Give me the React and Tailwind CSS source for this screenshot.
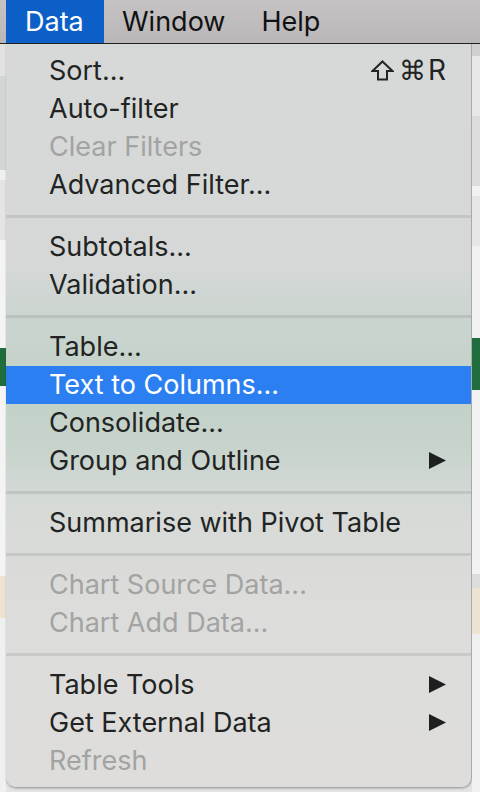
import React from "react";

const font = { fontFamily: "Inter, 'Noto Sans', 'DejaVu Sans', sans-serif" };

function Arrow() {
  return (
    <svg width="17" height="17" viewBox="0 0 17 17" className="shrink-0">
      <polygon points="0,0 17,8.5 0,17" fill="#1e201f" />
    </svg>
  );
}

function Shift() {
  return (
    <svg width="23" height="21" viewBox="0 0 23 21" className="shrink-0">
      <polygon
        points="11.5,1.5 21.5,11 16,11 16,19.5 7,19.5 7,11 1.5,11"
        fill="none"
        stroke="#222423"
        strokeWidth="2"
        strokeLinejoin="miter"
      />
    </svg>
  );
}

function Item({ label, disabled, active, shortcut, sub }) {
  return (
    <div
      className={
        "h-[38px] flex items-center pl-[43px] pr-[25px] pb-[2px] text-[27px] " +
        (active ? "bg-[#2c7ff0] text-white" : disabled ? "text-[#a2a3a2]" : "text-[#222423]")
      }
    >
      <span className="flex-1 leading-none whitespace-nowrap">{label}</span>
      {shortcut && (
        <span className="flex items-center leading-none text-[#222423]">
          <Shift />
          <span style={{ fontFamily: "'DejaVu Sans', sans-serif" }} className="text-[27px] ml-[5px] font-light">⌘</span>
          <span className="text-[28px] ml-[2px]">R</span>
        </span>
      )}
      {sub && <Arrow />}
    </div>
  );
}

function Sep() {
  return (
    <div className="h-[24px] pt-[11px]">
      <div className="h-[3px] bg-[rgba(0,0,0,0.085)]" />
    </div>
  );
}

export default function App() {
  return (
    <div className="w-[480px] h-[792px] overflow-hidden bg-[#e4e4e4] flex flex-col" style={font}>
      {/* menu bar */}
      <div className="h-[44px] shrink-0 flex items-stretch bg-gradient-to-b from-[#c4c2c2] to-[#b9b7b7] border-b border-[#202020]">
        <div className="w-[6px]" />
        <div className="w-[98px] bg-[#0b5fc7] text-white text-[27px] flex items-center pl-[19px] leading-none">Data</div>
        <div className="text-[27px] text-[#111] flex items-center pl-[18px] leading-none">Window</div>
        <div className="text-[27px] text-[#111] flex items-center pl-[36px] leading-none">Help</div>
      </div>
      <div className="flex-1 flex">
        {/* left background strip */}
        <div className="w-[6px] flex flex-col">
          <div className="h-[32px] bg-[#e2e2e2]" />
          <div className="h-[94px] bg-[#d3d5d7]" />
          <div className="h-[10px] bg-[#f0f0f0]" />
          <div className="h-[60px] bg-[#e4e4e4]" />
          <div className="h-[108px] bg-[#f4f4f4]" />
          <div className="h-[38px] bg-[#1f6c3c]" />
          <div className="h-[190px] bg-[#f4f4f4]" />
          <div className="h-[42px] bg-[#ece4d0]" />
          <div className="flex-1 bg-[#f0f0f0]" />
        </div>
        {/* menu */}
        <div
          className="w-[466px] h-[744px] rounded-b-[10px] border-r border-b border-[#a9a9a9] pt-[8px] shadow-[0_1px_2px_rgba(0,0,0,0.2)]"
          style={{
            background:
              "linear-gradient(to bottom, #d7d9d9 0%, #d5d8d7 30%, #c9d4ce 38%, #c2d2c8 46%, #c6d3cb 54%, #d6dad7 62%, #dcdcda 75%, #dedddb 100%)",
          }}
        >
          <Item label="Sort..." shortcut />
          <Item label="Auto-filter" />
          <Item label="Clear Filters" disabled />
          <Item label="Advanced Filter..." />
          <Sep />
          <Item label="Subtotals..." />
          <Item label="Validation..." />
          <Sep />
          <Item label="Table..." />
          <Item label="Text to Columns..." active />
          <Item label="Consolidate..." />
          <Item label="Group and Outline" sub />
          <Sep />
          <Item label="Summarise with Pivot Table" />
          <Sep />
          <Item label="Chart Source Data..." disabled />
          <Item label="Chart Add Data..." disabled />
          <Sep />
          <Item label="Table Tools" sub />
          <Item label="Get External Data" sub />
          <Item label="Refresh" disabled />
        </div>
        {/* right background strip */}
        <div className="flex-1 flex flex-col">
          <div className="h-[12px] bg-[#d0d0d0]" />
          <div className="h-[60px] bg-[#e8e8e8]" />
          <div className="h-[70px] bg-[#dcdcdc]" />
          <div className="h-[10px] bg-[#f2f2f2]" />
          <div className="h-[50px] bg-[#e6e6e6]" />
          <div className="h-[92px] bg-[#f2f2f2]" />
          <div className="h-[52px] bg-[#1f6c3c]" />
          <div className="h-[184px] bg-[#f2f2f2]" />
          <div className="h-[14px] bg-[#dcdcdc]" />
          <div className="h-[46px] bg-[#ece4d0]" />
          <div className="flex-1 bg-[#f0f0f0]" />
        </div>
      </div>
    </div>
  );
}
